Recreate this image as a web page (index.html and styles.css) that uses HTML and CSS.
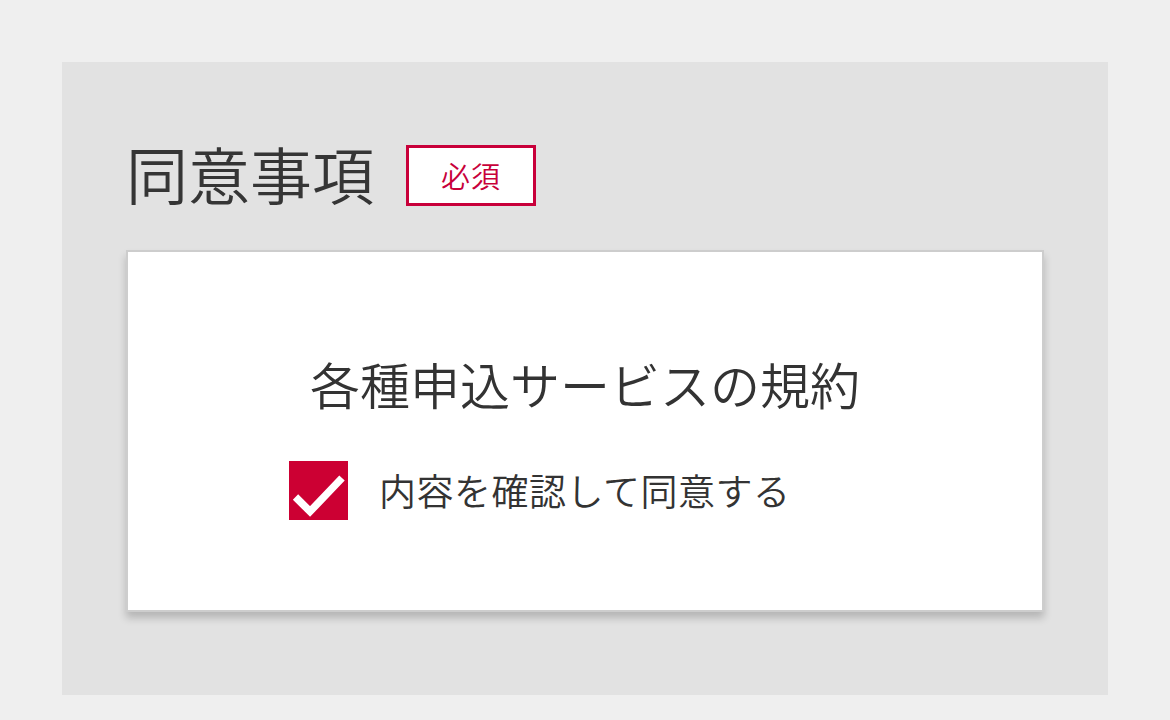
FILE: index.html
```html
<!DOCTYPE html>
<html lang="ja">
<head>
<meta charset="utf-8">
<title>同意事項</title>
<link rel="stylesheet" href="styles.css">
</head>
<body>
<section class="panel">
  <div class="heading-row">
    <h2 class="heading">同意事項</h2>
    <span class="badge">必須</span>
  </div>
  <div class="card">
    <p class="card-title">各種申込サービスの規約</p>
    <label class="agree-row">
      <span class="checkbox">
        <svg viewBox="0 0 59 59" width="59" height="59" aria-hidden="true">
          <polyline points="6.5,36 21,50.5 53,17" fill="none" stroke="#fff" stroke-width="7.5" stroke-linecap="butt" stroke-linejoin="miter"/>
        </svg>
      </span>
      <span class="agree-text">内容を確認して同意する</span>
    </label>
  </div>
</section>
</body>
</html>
```

FILE: styles.css
```css
html, body {
  margin: 0;
  padding: 0;
}
body {
  background: #efefef;
  font-family: "Noto Sans CJK JP", "Noto Sans", sans-serif;
  color: #333333;
  padding: 62px 62px 0 62px;
  box-sizing: border-box;
  width: 1170px;
  height: 720px;
  overflow: hidden;
}
.panel {
  background: #e2e2e2;
  width: 1046px;
  height: 633px;
  box-sizing: border-box;
  padding: 83px 64px 0 64px;
}
.heading-row {
  display: flex;
  align-items: center;
  gap: 32px;
  height: 61px;
}
.heading {
  margin: 0 0 6px 0;
  font-size: 62px;
  font-weight: 350;
  line-height: 1;
  color: #353535;
}
.badge {
  box-sizing: border-box;
  width: 130px;
  height: 61px;
  border: 3px solid #c8003a;
  background: #ffffff;
  color: #c8003a;
  font-size: 29px;
  font-weight: 350;
  line-height: 1;
  display: flex;
  align-items: center;
  justify-content: center;
  letter-spacing: 1px;
}
.card {
  margin-top: 44px;
  background: #ffffff;
  border: 2px solid #cdcdcd;
  box-sizing: border-box;
  width: 918px;
  height: 362px;
  box-shadow: 0 6px 8px rgba(0, 0, 0, 0.2);
  padding-top: 106px;
}
.card-title {
  margin: 0;
  text-align: center;
  font-size: 50px;
  font-weight: 350;
  line-height: 1;
  color: #333333;
}
.agree-row {
  display: flex;
  align-items: center;
  margin-top: 53px;
  padding-left: 161px;
  gap: 31px;
}
.checkbox {
  width: 59px;
  height: 59px;
  background: #cc0033;
  display: block;
  flex: none;
}
.checkbox svg {
  display: block;
}
.agree-text {
  font-size: 37px;
  font-weight: 350;
  letter-spacing: 0.5px;
  line-height: 1;
  color: #333333;
}
```
